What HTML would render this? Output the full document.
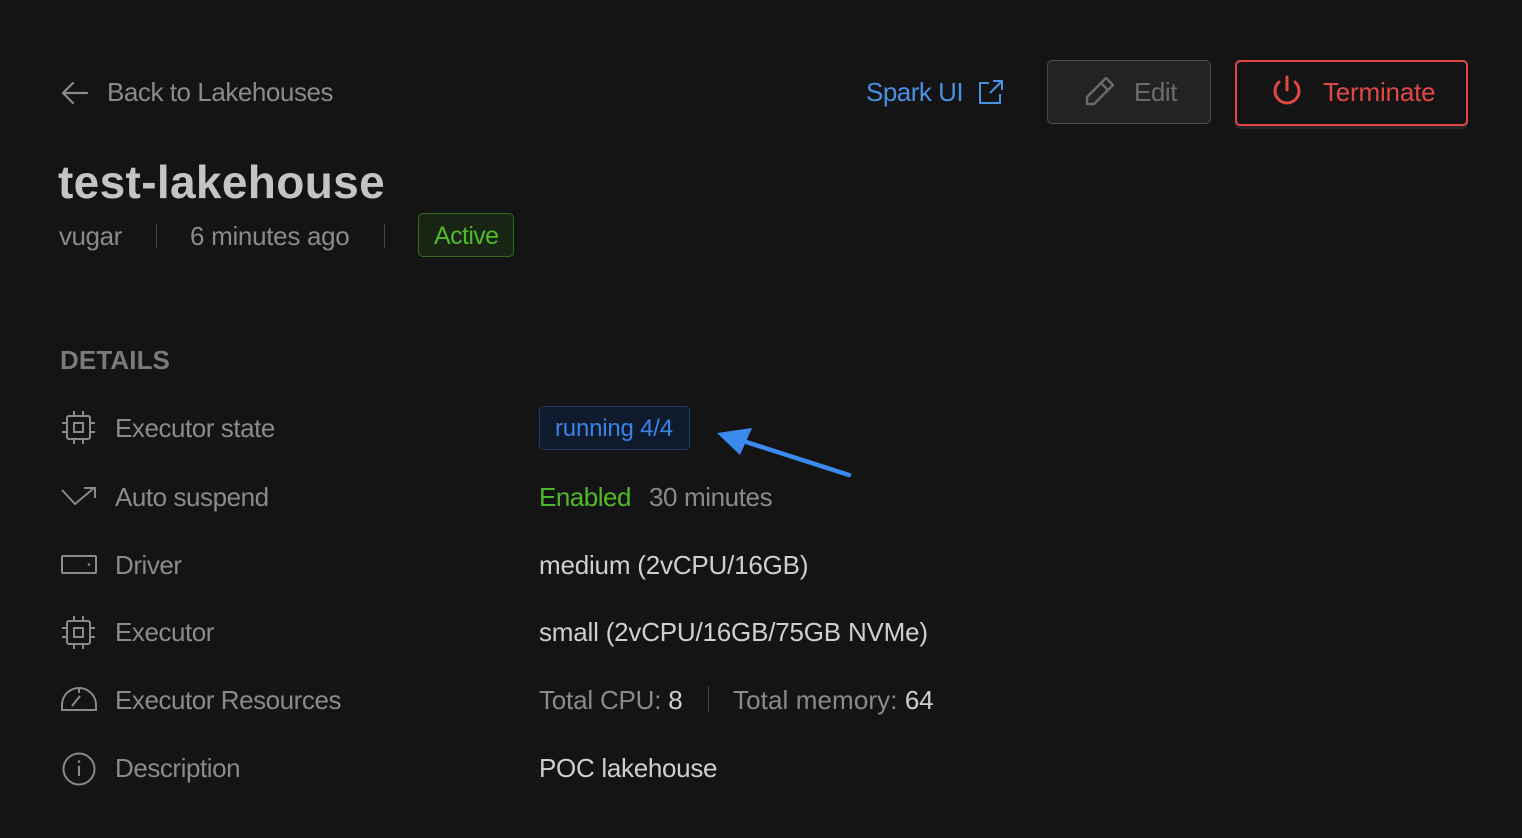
<!DOCTYPE html>
<html><head><meta charset="utf-8"><style>
html,body{margin:0;padding:0;background:#141414;width:1522px;height:838px;overflow:hidden}
body{font-family:"Liberation Sans",sans-serif;position:relative}
.a{position:absolute;white-space:nowrap;line-height:30px;font-size:26px;letter-spacing:-0.45px}
.l{color:#8a8a8a}
.v{color:#cfcfcf;letter-spacing:-0.2px}
svg{position:absolute}
</style></head><body>
<svg style="left:60px;top:80px" width="30" height="26" viewBox="0 0 30 26" fill="none" stroke="#8a8a8a" stroke-width="2.2" stroke-linecap="round" stroke-linejoin="round"><path d="M27 13H3M13 3L3 13l10 10"/></svg>
<div class="a l" style="left:107px;top:77px">Back to Lakehouses</div>

<div class="a" style="left:866px;top:77px;color:#4a90e2;letter-spacing:-0.5px">Spark UI</div>
<svg style="left:978px;top:79px" width="26" height="26" viewBox="0 0 26 26" fill="none" stroke="#4a90e2" stroke-width="2"><path d="M11 4H2v20h20v-9M15 2h9v9M24 2L12 14"/></svg>

<div style="position:absolute;left:1047px;top:60px;width:162px;height:62px;border:1.5px solid #4a4a4a;border-radius:5px;background:#232323"></div>
<svg style="left:1082px;top:75px" width="34" height="34" viewBox="0 0 34 34" fill="none" stroke="#6a6a6a" stroke-width="2.4" stroke-linejoin="round"><path d="M24 3l7 7L12 29H5v-7z M19 8l7 7"/></svg>
<div class="a" style="left:1134px;top:77px;color:#6c6c6c">Edit</div>

<div style="position:absolute;left:1235px;top:60px;width:229px;height:62px;border:2px solid #e04848;border-radius:5px;background:#141414;box-shadow:0 3px 0 #262626"></div>
<svg style="left:1269px;top:74px" width="36" height="36" viewBox="0 0 36 36" fill="none" stroke="#e04848" stroke-width="3" stroke-linecap="round"><path d="M18 3v13M10 8a12 12 0 1 0 16 0"/></svg>
<div class="a" style="left:1323px;top:77px;color:#e04848;letter-spacing:-0.2px">Terminate</div>

<div class="a" style="left:58px;top:155px;font-size:46px;line-height:54px;font-weight:bold;color:#c4c4c4;letter-spacing:0.35px">test-lakehouse</div>
<div class="a l" style="left:59px;top:221px">vugar</div>
<div style="position:absolute;left:156px;top:224px;width:1px;height:24px;background:#444"></div>
<div class="a l" style="left:190px;top:221px;letter-spacing:-0.3px">6 minutes ago</div>
<div style="position:absolute;left:384px;top:224px;width:1px;height:24px;background:#444"></div>
<div style="position:absolute;left:418px;top:213px;width:94px;height:42px;border:1.5px solid #2f6a1f;border-radius:5px;background:#182414"></div>
<div class="a" style="left:434px;top:221px;color:#4fb92a;font-size:25px;letter-spacing:-0.6px">Active</div>

<div class="a" style="left:60px;top:345px;color:#7a7a7a;font-weight:bold;font-size:26px;letter-spacing:0.1px">DETAILS</div>

<svg style="left:60px;top:409px" width="37" height="37" viewBox="0 0 37 37" fill="none" stroke="#8a8a8a" stroke-width="2"><rect x="7" y="7" width="23" height="23" rx="2"/><rect x="14" y="14" width="9" height="9"/><path d="M14 2v5M23 2v5M14 30v5M23 30v5M2 14h5M2 23h5M30 14h5M30 23h5"/></svg>
<div class="a l" style="left:115px;top:413px">Executor state</div>
<div style="position:absolute;left:539px;top:406px;width:149px;height:42px;border:1.5px solid #1f3d6a;border-radius:5px;background:#0f1a2c"></div>
<div class="a" style="left:555px;top:414px;color:#3b82e6;font-size:24px;letter-spacing:-0.2px">running 4/4</div>
<svg style="left:710px;top:420px" width="150" height="65" viewBox="0 0 150 65" fill="none"><path d="M139 55L30 20" stroke="#3b8af0" stroke-width="4.5" stroke-linecap="round"/><path d="M7 13L42 8L30 35z" fill="#3b8af0"/></svg>

<svg style="left:60px;top:485px" width="38" height="24" viewBox="0 0 38 24" fill="none" stroke="#8a8a8a" stroke-width="2"><path d="M2 5l13 14 19-16M24 3h11v10"/></svg>
<div class="a l" style="left:115px;top:482px">Auto suspend</div>
<div class="a" style="left:539px;top:482px;color:#4fb92a;letter-spacing:-0.5px">Enabled</div>
<div class="a l" style="left:649px;top:482px;letter-spacing:-0.4px">30 minutes</div>

<svg style="left:60px;top:553px" width="38" height="24" viewBox="0 0 38 24" fill="none" stroke="#8a8a8a" stroke-width="2"><rect x="2" y="3" width="34" height="17" rx="1"/><circle cx="29" cy="11.5" r="1.3" fill="#8a8a8a" stroke="none"/></svg>
<div class="a l" style="left:115px;top:550px">Driver</div>
<div class="a v" style="left:539px;top:550px">medium (2vCPU/16GB)</div>

<svg style="left:60px;top:614px" width="37" height="37" viewBox="0 0 37 37" fill="none" stroke="#8a8a8a" stroke-width="2"><rect x="7" y="7" width="23" height="23" rx="2"/><rect x="14" y="14" width="9" height="9"/><path d="M14 2v5M23 2v5M14 30v5M23 30v5M2 14h5M2 23h5M30 14h5M30 23h5"/></svg>
<div class="a l" style="left:115px;top:617px">Executor</div>
<div class="a v" style="left:539px;top:617px;letter-spacing:-0.2px">small (2vCPU/16GB/75GB NVMe)</div>

<svg style="left:60px;top:686px" width="38" height="26" viewBox="0 0 38 26" fill="none" stroke="#8a8a8a" stroke-width="2"><path d="M2 24h34v-5A17 17 0 0 0 2 19z M19 3v4 M12 20l8-10"/></svg>
<div class="a l" style="left:115px;top:685px">Executor Resources</div>
<div class="a l" style="left:539px;top:685px;letter-spacing:-0.2px">Total CPU: <span class="v">8</span></div>
<div style="position:absolute;left:708px;top:686px;width:1px;height:26px;background:#444"></div>
<div class="a l" style="left:733px;top:685px;letter-spacing:0.1px">Total memory: <span class="v">64</span></div>

<svg style="left:61px;top:751px" width="36" height="36" viewBox="0 0 36 36" fill="none" stroke="#8a8a8a" stroke-width="2"><circle cx="18" cy="18" r="15.5"/><path d="M18 15v10"/><circle cx="18" cy="10.5" r="1.3" fill="#8a8a8a" stroke="none"/></svg>
<div class="a l" style="left:115px;top:753px">Description</div>
<div class="a v" style="left:539px;top:753px;letter-spacing:-0.3px">POC lakehouse</div>
</body></html>
